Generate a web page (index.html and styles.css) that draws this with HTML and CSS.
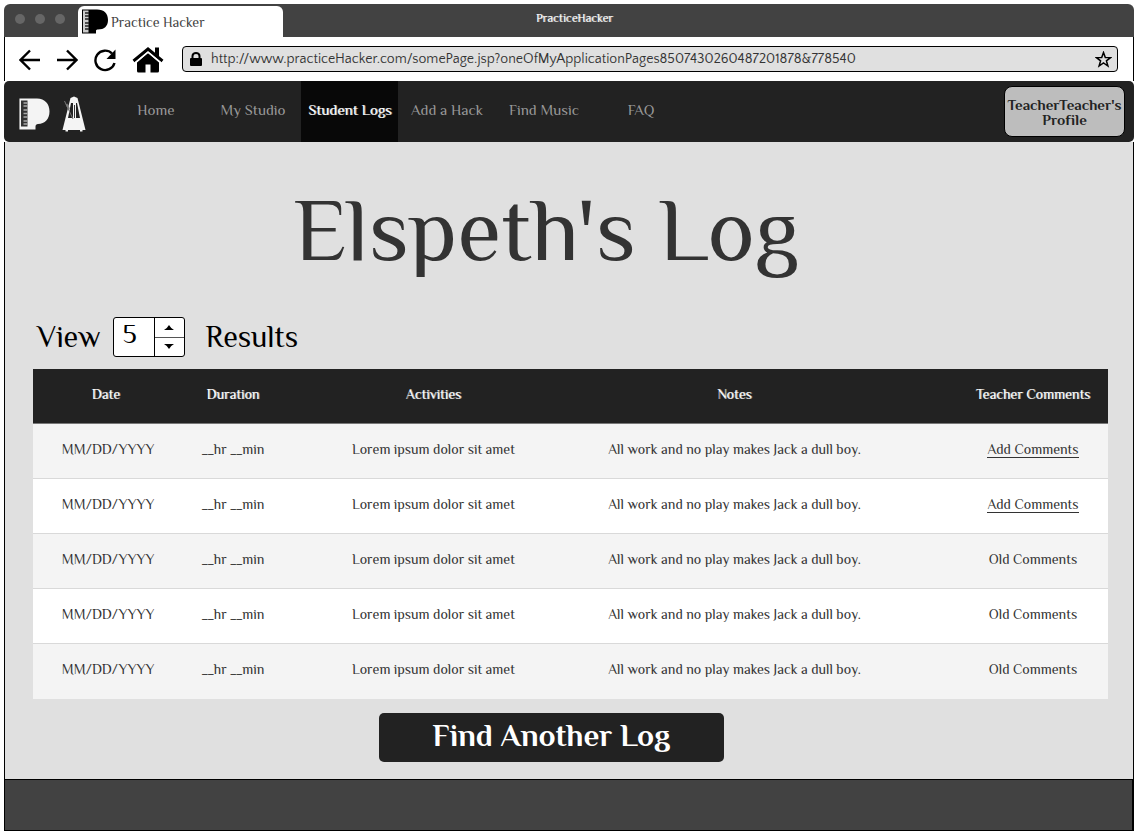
FILE: index.html
```html
<!DOCTYPE html>
<html lang="en">
<head>
<meta charset="utf-8">
<meta name="viewport" content="width=device-width, initial-scale=1">
<title>Practice Hacker</title>
<link rel="stylesheet" href="styles.css">
</head>
<body>
<div class="window">
  <div class="titlebar">
    <span class="dots"><i class="dot"></i><i class="dot"></i><i class="dot"></i></span>
    <div class="tab">
      <svg class="tab-icon" viewBox="0 0 26 25" aria-hidden="true">
        <path d="M0 .5H15C22 .5 26 4.500 26 11C26 17.500 22 20.500 16 20.500C14.500 20.500 14 21 14 22V24.500H0Z" fill="#000"/>
        <path d="M1 1.500H6.500V23.500H1Z" fill="#ccc"/>
        <path d="M3 4H7M3 7H7M3 10H7M3 14H7M3 17H7M3 20H7" stroke="#222" stroke-width="1.500"/>
      </svg>
      <span>Practice Hacker</span>
    </div>
    <span class="window-title">PracticeHacker</span>
  </div>

  <div class="toolbar">
    <div class="tools">
      <button class="tool" aria-label="Back"><svg width="22" height="22" viewBox="0 0 22 22" fill="none" stroke="#000" stroke-width="2.400"><path d="M21 11H2M11 1.500L1.500 11L11 20.500"/></svg></button>
      <button class="tool" aria-label="Forward"><svg width="22" height="22" viewBox="0 0 22 22" fill="none" stroke="#000" stroke-width="2.400"><path d="M1 11H20M11 1.500L20.500 11L11 20.500"/></svg></button>
      <button class="tool" aria-label="Reload"><svg width="24" height="24" viewBox="0 0 24 24"><path d="M21.500 15A9.700 9.700 0 1 1 19 5.500" fill="none" stroke="#000" stroke-width="2.400"/><path d="M22.500 1.500V11H13.500Z"/></svg></button>
      <button class="tool" aria-label="Home page"><svg width="32" height="26" viewBox="0 0 32 26"><path d="M16 6L27 15.500V24Q27 25.500 25.500 25.500H18.500V17.500H13.500V25.500H6.500Q5 25.500 5 24V15.500Z"/><path d="M1.500 14L16 2L30.500 14" fill="none" stroke="#000" stroke-width="3"/><path d="M23 .500H27V10L23 6.500Z"/><path d="M3.500 15.500L16 5.200L28.500 15.500" fill="none" stroke="#fff" stroke-width="1.200"/></svg></button>
    </div>
    <div class="address">
      <svg width="12" height="14" viewBox="0 0 12 14" aria-hidden="true"><rect y="6" width="12" height="8" rx="1"/><path d="M2.500 7V4A3.500 3 0 0 1 9.500 4V7" fill="none" stroke="#000" stroke-width="2"/></svg>
      <input class="url" type="text" aria-label="Address" value="http://www.practiceHacker.com/somePage.jsp?oneOfMyApplicationPages8507430260487201878&amp;778540">
      <button class="star" aria-label="Bookmark"><svg width="17" height="17" viewBox="0 0 17 17"><path d="M8.500 1.500L10.300 6.400L15.500 6.600L11.400 9.800L12.900 15L8.500 12L4.100 15L5.600 9.800L1.500 6.600L6.700 6.400Z" fill="none" stroke="#000" stroke-width="1.500"/></svg></button>
    </div>
  </div>

  <nav class="nav">
    <a class="brand" href="#" aria-label="Practice Hacker">
      <svg width="31" height="32" viewBox="0 0 31 32"><path d="M1 .5H18C26 .5 30.500 6 30.500 13.500C30.500 21 26 26 19 26C17.500 26 16.500 27 16.500 28.500V31.500H1Z" fill="#f4f4f4"/><path d="M2 2.500H8.500V28.500H2Z" fill="#333"/><path d="M4.500 5H8.500M4.500 8H8.500M4.500 12H8.500M4.500 15.500H8.500M4.500 19H8.500M4.500 23H8.500M4.500 26H8.500" stroke="#aaa" stroke-width="1.500"/><path d="M.5 .5V31.500" stroke="#999"/></svg>
      <svg width="24" height="36" viewBox="0 0 24 36"><path d="M8.500 2L12 .5L15.500 2L23.500 34H20.500V35.500H18V34H6V35.500H3.500V34H.500Z" fill="#f4f4f4"/><path d="M9 7H11V22H6ZM14 7H15L18 22H14Z" fill="#222"/><path d="M12.500 9V22" stroke="#333"/><path d="M2.500 5L11 23" stroke="#777"/><path d="M4.500 8L7 13" stroke="#777" stroke-width="2"/></svg>
    </a>
    <ul class="menu">
      <li><a href="#">Home</a></li>
      <li><a href="#">My Studio</a></li>
      <li><a class="active" href="#" aria-current="page">Student Logs</a></li>
      <li><a href="#">Add a Hack</a></li>
      <li><a href="#">Find Music</a></li>
      <li><a href="#">FAQ</a></li>
    </ul>
    <button class="profile">TeacherTeacher's<br>Profile</button>
  </nav>

  <main class="content">
    <h1 class="heading">Elspeth's Log</h1>
    <div class="view">
      <label for="count">View</label>
      <div class="spinner">
        <input class="count" id="count" type="text" inputmode="numeric" value="5">
        <div class="steps">
          <button class="step" aria-label="More"><svg width="10" height="5" viewBox="0 0 10 5"><path d="M0 5Q3 3.500 5 0Q7 3.500 10 5Z"/></svg></button>
          <button class="step" aria-label="Fewer"><svg width="10" height="5" viewBox="0 0 10 5"><path d="M0 0Q3 1.500 5 5Q7 1.500 10 0Z"/></svg></button>
        </div>
      </div>
      <span>Results</span>
    </div>
    <table class="log">
      <colgroup><col class="c-date"><col class="c-duration"><col class="c-activities"><col class="c-notes"><col class="c-comments"></colgroup>
      <thead><tr><th>Date</th><th>Duration</th><th>Activities</th><th>Notes</th><th>Teacher Comments</th></tr></thead>
      <tbody>
        <tr><td>MM/DD/YYYY</td><td>__hr __min</td><td>Lorem ipsum dolor sit amet</td><td>All work and no play makes Jack a dull boy.</td><td><a href="#">Add Comments</a></td></tr>
        <tr><td>MM/DD/YYYY</td><td>__hr __min</td><td>Lorem ipsum dolor sit amet</td><td>All work and no play makes Jack a dull boy.</td><td><a href="#">Add Comments</a></td></tr>
        <tr><td>MM/DD/YYYY</td><td>__hr __min</td><td>Lorem ipsum dolor sit amet</td><td>All work and no play makes Jack a dull boy.</td><td>Old Comments</td></tr>
        <tr><td>MM/DD/YYYY</td><td>__hr __min</td><td>Lorem ipsum dolor sit amet</td><td>All work and no play makes Jack a dull boy.</td><td>Old Comments</td></tr>
        <tr><td>MM/DD/YYYY</td><td>__hr __min</td><td>Lorem ipsum dolor sit amet</td><td>All work and no play makes Jack a dull boy.</td><td>Old Comments</td></tr>
      </tbody>
    </table>
    <button class="find">Find Another Log</button>
  </main>
  <footer class="footer"></footer>
</div>
</body>
</html>
```
FILE: styles.css
```css
* { box-sizing: border-box; }
body { margin: 0; background: #fff; font-family: Philosopher, Lato, sans-serif; font-size: 14px; line-height: 20px; color: #333; }
button { font: inherit; color: inherit; margin: 0; padding: 0; border: 0; background: none; cursor: pointer; }
input { font: inherit; color: inherit; margin: 0; padding: 0; border: 0; background: none; }
a { color: inherit; text-decoration: none; }
svg { display: block; flex: none; }

.window { display: flex; flex-direction: column; min-height: calc(100vh - 8px); margin: 4px 3px 4px 4px; }

.titlebar { display: grid; grid-template-columns: 74px 205px 1fr 268px; align-items: end; height: 33px; background: #424242; border-radius: 6px 6px 0 0; }
.dots { display: flex; gap: 10px; padding-left: 11px; align-self: center; }
.dot { width: 10px; height: 10px; margin-bottom: 3px; border-radius: 50%; background: #666; }
.tab { display: flex; align-items: center; gap: 3px; height: 31px; padding-left: 4px; background: #fff; border-radius: 6px 6px 0 0; color: #444; }
.tab-icon { width: 26px; height: 25px; }
.window-title { align-self: center; padding-bottom: 5px; text-align: center; color: #fff; font-size: 12px; text-shadow: 1px 0 0 #999; }

.toolbar { display: flex; align-items: center; gap: 18px; height: 44px; padding-right: 15px; border: solid #000; border-width: 0 1px; }
.tools { display: flex; align-items: center; gap: 15px; padding: 1px 0 0 14px; }
.address { display: flex; flex: 1; align-items: center; gap: 9px; height: 26px; padding: 0 5px 0 7px; border: 1px solid #000; border-radius: 4px; background: #e0e0e0; }
.url { flex: 1; min-width: 0; color: #333; font-family: "Quattrocento Sans", Lato, sans-serif; font-weight: 300; font-size: 14px; }

.nav { display: flex; align-items: center; height: 61px; padding: 0 9px 0 15px; border-radius: 5px; background: #222; color: #999; font-size: 15px; }
.brand { display: flex; align-items: center; gap: 12px; width: 88px; padding-top: 4px; }
.menu { display: flex; align-self: stretch; margin: 0; padding: 0; list-style: none; }
.menu li { display: flex; width: 97px; }
.menu a { display: flex; flex: 1; align-items: center; justify-content: center; padding: 0 0 3px 1px; white-space: nowrap; }
.menu .active { background: #080808; color: #fff; text-shadow: 1px 0 0 #999; }
.profile { width: 121px; height: 51px; margin-left: auto; border: 1px solid #000; border-radius: 8px; background: #bdbdbd; color: #222; font-weight: 700; line-height: 15px; white-space: nowrap; }

.content { display: flex; flex: 1; flex-direction: column; padding: 38px 25px 17px 28px; border: solid #000; border-width: 0 1px; background: #e0e0e0; }
.heading { margin: 0; padding-right: 48px; font-size: 90px; line-height: 100px; font-weight: 400; text-align: center; }
.view { display: flex; align-items: center; gap: 12px; margin: 37px 0 12px; padding-left: 4px; font-size: 30px; line-height: 36px; color: #000; }
.spinner { display: flex; width: 72px; height: 40px; margin-right: 9px; border: 1px solid #000; border-radius: 3px; background: #fff; }
.count { flex: 1; min-width: 0; padding: 0 0 6px 9px; font-size: 27px; }
.steps { display: flex; flex-direction: column; width: 30px; border-left: 1px solid #000; }
.step { display: flex; flex: 1; align-items: center; justify-content: center; }
.step + .step { border-top: 1px solid #555; }

.log { width: 100%; table-layout: fixed; border-collapse: separate; border-spacing: 0; text-align: center; }
.c-date { width: 150px; }
.c-duration { width: 100px; }
.c-activities { width: 28%; }
.c-notes { width: 28%; }
.log th, .log td { height: 55px; padding: 0 0 4px; }
.log th { padding-bottom: 5px; border-bottom: 1px solid #777; background: #222; color: #fff; font-weight: 400; text-shadow: 1px 0 0 #999; }
.log th:first-child { padding-right: 4px; }
.log td { border-bottom: 1px solid #d9d9d9; background: #fff; }
.log tbody tr:nth-child(odd) td { background: #f4f4f4; }
.log tbody tr:last-child td { border-bottom-color: #f4f4f4; }
.log tr > :last-child { padding-left: 73px; }
.log a { border-bottom: 1px solid #333; }

.find { align-self: center; width: 345px; height: 49px; margin: 14px 38px 0 0; padding-bottom: 4px; border-radius: 5px; background: #222; color: #fff; font-size: 31px; line-height: 36px; font-weight: 700; }
.footer { height: 52px; border: 1px solid #000; border-right-width: 2px; background: #424242; }
```
